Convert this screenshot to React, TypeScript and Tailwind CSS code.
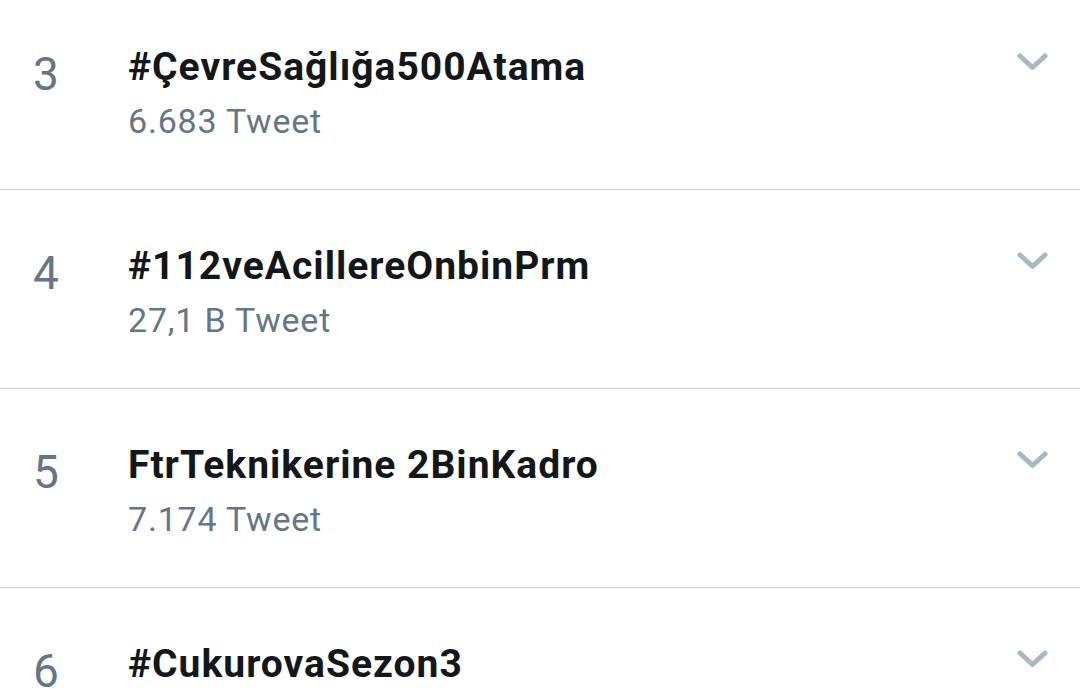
const trends = [
  { rank: 3, name: "#ÇevreSağlığa500Atama", count: "6.683 Tweet" },
  { rank: 4, name: "#112veAcillereOnbinPrm", count: "27,1 B Tweet" },
  { rank: 5, name: "FtrTeknikerine 2BinKadro", count: "7.174 Tweet" },
  { rank: 6, name: "#CukurovaSezon3", count: "12,4 B Tweet" },
];

function Chevron() {
  return (
    <svg width="31" height="18" viewBox="0 0 31 18" fill="none">
      <polyline
        points="3,3 15.5,14.5 28,3"
        stroke="#aab8c2"
        strokeWidth="5"
        strokeLinecap="round"
        strokeLinejoin="round"
      />
    </svg>
  );
}

export default function App() {
  return (
    <div className="h-[689px] w-[1080px] overflow-hidden bg-white font-['Roboto',sans-serif]">
      <div className="mt-[-9px]">
        {trends.map((t) => (
          <div key={t.rank} className="flex h-[199px] border-b border-[#cdd3d3]">
            <div className="w-[128px] shrink-0 pl-[33px] pt-[60px] text-[46px] leading-[46px] text-[#657786]">
              {t.rank}
            </div>
            <div className="flex-1 pt-[54px]">
              <div className="whitespace-nowrap text-[39px] font-bold leading-[44px] tracking-[1px] text-[#14171a]">
                {t.name}
              </div>
              <div className="mt-[12px] text-[34px] leading-[40px] tracking-[0.8px] text-[#657786]">
                {t.count}
              </div>
            </div>
            <div className="pr-[32px] pt-[62px]">
              <Chevron />
            </div>
          </div>
        ))}
      </div>
    </div>
  );
}
